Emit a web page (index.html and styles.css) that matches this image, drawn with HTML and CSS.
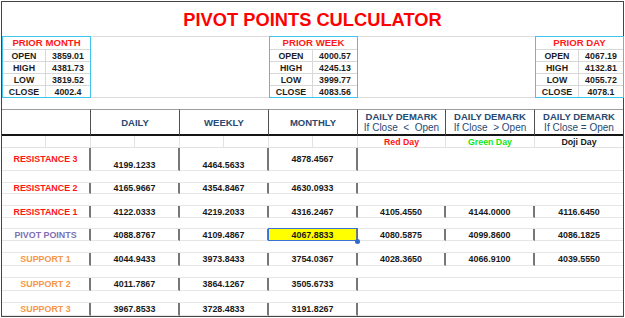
FILE: index.html
```html
<!DOCTYPE html>
<html>
<head>
<meta charset="utf-8">
<link rel="stylesheet" href="styles.css">
</head>
<body>
<div class="sheet">
  <div class="title">PIVOT POINTS CULCULATOR</div>

  <div class="cols prior">
    <div class="pbox month">
      <div class="ph">PRIOR MONTH</div>
      <div class="k">OPEN</div><div class="v">3859.01</div>
      <div class="k">HIGH</div><div class="v">4381.73</div>
      <div class="k">LOW</div><div class="v">3819.52</div>
      <div class="k last">CLOSE</div><div class="v last">4002.4</div>
    </div>
    <div class="pbox week">
      <div class="ph">PRIOR WEEK</div>
      <div class="k">OPEN</div><div class="v">4000.57</div>
      <div class="k">HIGH</div><div class="v">4245.13</div>
      <div class="k">LOW</div><div class="v">3999.77</div>
      <div class="k last">CLOSE</div><div class="v last">4083.56</div>
    </div>
    <div class="pbox day">
      <div class="ph">PRIOR DAY</div>
      <div class="k">OPEN</div><div class="v">4067.19</div>
      <div class="k">HIGH</div><div class="v">4132.81</div>
      <div class="k">LOW</div><div class="v">4055.72</div>
      <div class="k last">CLOSE</div><div class="v last">4078.1</div>
    </div>
  </div>

  <div class="spacer"></div>

  <div class="cols table">
    <div class="h"></div>
    <div class="h">DAILY</div>
    <div class="h">WEEKLY</div>
    <div class="h">MONTHLY</div>
    <div class="h"><span>DAILY DEMARK</span><span class="sub">If Close&nbsp; &lt;&nbsp; Open</span></div>
    <div class="h"><span>DAILY DEMARK</span><span class="sub">If Close&nbsp; &gt; Open</span></div>
    <div class="h last"><span>DAILY DEMARK</span><span class="sub">If Close = Open</span></div>

    <div class="s split"></div>
    <div class="s split"></div>
    <div class="s split"></div>
    <div class="s split"></div>
    <div class="s red">Red Day</div>
    <div class="s green">Green Day</div>
    <div class="s last dark">Doji Day</div>

    <div class="c b lab red">RESISTANCE 3</div>
    <div class="c b bot">4199.1233</div>
    <div class="c b bot">4464.5633</div>
    <div class="c b">4878.4567</div>
    <div class="c"></div><div class="c"></div><div class="c"></div>
    <div class="gap"></div>

    <div class="c b lab red">RESISTANCE 2</div>
    <div class="c b">4165.9667</div>
    <div class="c b">4354.8467</div>
    <div class="c b">4630.0933</div>
    <div class="c"></div><div class="c"></div><div class="c"></div>
    <div class="gap"></div>

    <div class="c b lab red">RESISTANCE 1</div>
    <div class="c b">4122.0333</div>
    <div class="c b">4219.2033</div>
    <div class="c b">4316.2467</div>
    <div class="c b">4105.4550</div>
    <div class="c b">4144.0000</div>
    <div class="c">4116.6450</div>
    <div class="gap"></div>

    <div class="c b lab purple">PIVOT POINTS</div>
    <div class="c b">4088.8767</div>
    <div class="c b">4109.4867</div>
    <div class="c b hl">4067.8833</div>
    <div class="c b">4080.5875</div>
    <div class="c b">4099.8600</div>
    <div class="c">4086.1825</div>
    <div class="gap"></div>

    <div class="c b lab orange">SUPPORT 1</div>
    <div class="c b">4044.9433</div>
    <div class="c b">3973.8433</div>
    <div class="c b">3754.0367</div>
    <div class="c b">4028.3650</div>
    <div class="c b">4066.9100</div>
    <div class="c">4039.5550</div>
    <div class="gap"></div>

    <div class="c b lab orange">SUPPORT 2</div>
    <div class="c b">4011.7867</div>
    <div class="c b">3864.1267</div>
    <div class="c b">3505.6733</div>
    <div class="c"></div><div class="c"></div><div class="c"></div>
    <div class="gap"></div>

    <div class="c b lab orange">SUPPORT 3</div>
    <div class="c b">3967.8533</div>
    <div class="c b">3728.4833</div>
    <div class="c b">3191.8267</div>
    <div class="c"></div><div class="c"></div><div class="c"></div>
  </div>
</div>
</body>
</html>
```

FILE: styles.css
```css
* { box-sizing: border-box; }

body {
  margin: 0;
  background: #ffffff;
  font-family: "Liberation Sans", Arial, sans-serif;
}

.sheet {
  margin: 1px 0 0 1px;
  width: 623px;
  height: 316px;
  border: 1px solid #454545;
  display: flex;
  flex-direction: column;
}

.title {
  height: 34px;
  flex: none;
  display: flex;
  align-items: center;
  justify-content: center;
  padding-top: 2px;
  color: #ff0000;
  font-weight: bold;
  font-size: 18.3px;
}

.cols {
  display: grid;
  grid-template-columns: 89px 89px 89px 89px 88px 89px 88px;
}

.prior {
  height: 62px;
  flex: none;
  background:
    linear-gradient(#dcdcdc, #dcdcdc) top / 100% 1px no-repeat,
    linear-gradient(#dcdcdc, #dcdcdc) bottom / 100% 1px no-repeat;
}

.pbox {
  border: 1px solid #3ec6ee;
  display: grid;
  grid-template-columns: 43px 1fr;
  grid-template-rows: 13px 12px 12px 12px 11px;
  font-size: 8.8px;
  font-weight: bold;
  color: #1c1c1c;
  line-height: 10px;
}

.pbox > div {
  display: flex;
  align-items: center;
  justify-content: center;
  border-bottom: 1px solid #d8d8d8;
}

.pbox .ph {
  grid-column: 1 / -1;
  color: #ff1a1a;
  font-size: 9.6px;
}

.pbox .k { border-right: 1px solid #d8d8d8; }
.pbox .last { border-bottom: none; }

.month { grid-column: 1; }
.week { grid-column: 4; }
.day { grid-column: 7; margin-right: -1px; }

.spacer { height: 11px; flex: none; }

.table {
  flex: 1;
  grid-template-rows: 27px 12px 23px 12px 11px 12px 12px 11px 12px 12px 13px 12px 13px 12px 13px;
}

.h {
  border-top: 1px solid #9c9c9c;
  border-bottom: 2px solid #151515;
  border-right: 1px solid #505050;
  color: #274a72;
  font-weight: bold;
  font-size: 9.5px;
  line-height: 11px;
  display: flex;
  flex-direction: column;
  align-items: center;
  justify-content: center;
  text-align: center;
  white-space: nowrap;
}

.h.last { border-right: none; }

.h .sub {
  font-weight: normal;
  font-size: 10px;
}

.s {
  border-bottom: 1px solid #e2e2e2;
  border-right: 1px solid #e2e2e2;
  font-size: 8.8px;
  font-weight: bold;
  line-height: 10px;
  display: flex;
  align-items: center;
  justify-content: center;
}

.s.last { border-right: none; }

.s.split {
  background: linear-gradient(#e2e2e2, #e2e2e2) 43px 0 / 1px 100% no-repeat;
}

.gap {
  grid-column: 1 / -1;
  border-bottom: 1px solid #e6e6e6;
}

.c {
  border-bottom: 1px solid #e6e6e6;
  display: flex;
  align-items: center;
  justify-content: center;
  font-size: 8.9px;
  font-weight: bold;
  line-height: 10px;
  color: #1a1a1a;
  white-space: nowrap;
}

.c.b { border-right: 2px solid #777777; }
.c.bot { align-items: flex-end; }

.red { color: #ff1414; }
.green { color: #12e612; }
.dark { color: #1a1a1a; }
.purple { color: #7d70b6; }
.orange { color: #f79646; }

.hl {
  position: relative;
  background: #ffff00;
}

.hl::after {
  content: "";
  position: absolute;
  left: -1px;
  top: -1px;
  right: -2px;
  bottom: -1px;
  border: 1px solid #3a72d2;
}

.hl::before {
  content: "";
  position: absolute;
  right: -4px;
  bottom: -4px;
  width: 5px;
  height: 5px;
  border-radius: 50%;
  background: #2f6ad0;
  z-index: 1;
}
```
